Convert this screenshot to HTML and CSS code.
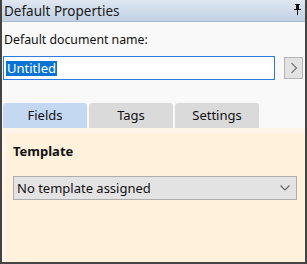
FILE: index.html
```
<!DOCTYPE html>
<html lang="en">
<head>
  <meta charset="UTF-8" />
  <title>Default Properties</title>
  <link rel="stylesheet" href="styles.css">
</head>
<body>
  <div class="pane">
    <div class="title-bar">
      <span>Default Properties</span>
      <svg class="pin" width="9" height="11" viewBox="0 0 9 11">
        <path d="M2 0h5v1H6v4h2v1H5v5H4V6H1V5h2V1H2z" fill="#111"/>
        <rect x="3" y="1" width="1" height="4" fill="#111"/>
      </svg>
    </div>

    <div class="content">
      <label class="name-label">Default document name:</label>
      <div class="name-row">
        <div class="name-input"><span class="selected">Untitled</span></div>
        <button class="arrow-btn">
          <svg width="8" height="12" viewBox="0 0 8 12"><path d="M1.5 1l5 5-5 5" fill="none" stroke="#777" stroke-width="1.2"/></svg>
        </button>
      </div>

      <!-- tab strip -->
      <div class="tabs">
        <div class="tab active">Fields</div>
        <div class="tab">Tags</div>
        <div class="tab">Settings</div>
      </div>

      <div class="tab-panel">
        <div class="tab-inner">
          <div class="section-title">Template</div>
          <div class="select">
            <span>No template assigned</span>
            <svg width="10" height="6" viewBox="0 0 10 6"><path d="M0.5 0.5l4.5 4.5 4.5-4.5" fill="none" stroke="#666" stroke-width="1.2"/></svg>
          </div>
        </div>
      </div>
    </div>
  </div>
</body>
</html>
```

FILE: styles.css
```
body {
  margin: 0;
  font-family: 'Noto Sans', sans-serif;
  font-size: 12.3px;
  color: #111;
  background: #f9f9f9;
}

.pane {
  width: 307px;
  height: 264px;
  box-sizing: border-box;
  border: 2px solid #444;
  border-top: none;
  display: flex;
  flex-direction: column;
  background: #f9f9f9;
}

.title-bar {
  height: 21px;
  display: flex;
  align-items: center;
  justify-content: space-between;
  padding: 0 3px 0 2px;
  background: linear-gradient(#dfe7f1, #c1d0e2);
  border-bottom: 1px solid #a9bbd2;
  font-size: 13.5px;
  color: #1a1a1a;
}

.pin {
  margin-top: -3px;
}

.content {
  flex: 1;
  display: flex;
  flex-direction: column;
}

.name-label {
  padding: 9px 0 0 2px;
  height: 25px;
}

.name-row {
  display: flex;
  align-items: center;
  gap: 9px;
  padding: 0 2px 0 1px;
}

.name-input {
  width: 271px;
  height: 22px;
  border: 1px solid #2c7be0;
  background: #fff;
  display: flex;
  align-items: center;
  padding-left: 2px;
  font-size: 13px;
}

.selected {
  background: #0a74d6;
  color: #fff;
  line-height: 15px;
  padding: 0 1px;
}

.arrow-btn {
  width: 19px;
  height: 22px;
  padding: 0;
  border: 1px solid #b5b5b5;
  background: #e3e3e3;
  display: flex;
  align-items: center;
  justify-content: center;
}

.tabs {
  display: flex;
  gap: 2px;
  margin-top: 23px;
  padding-left: 1px;
}

.tab {
  width: 84px;
  height: 25px;
  box-sizing: border-box;
  background: #dadada;
  border-radius: 3px 3px 0 0;
  text-align: center;
  line-height: 25px;
  font-size: 13px;
}

.tab.active {
  background: #c4d8f2;
}

.tab-panel {
  flex: 1;
  background: #fff6e9;
  padding: 5px 0 0 4px;
  display: flex;
}

.tab-inner {
  flex: 1;
  background: #fff1dc;
  padding: 9px 8px 0 7px;
}

.section-title {
  font-weight: bold;
  font-size: 13px;
  height: 34px;
}

.select {
  height: 22px;
  border: 1px solid #adadad;
  background: #e3e3e3;
  display: flex;
  align-items: center;
  justify-content: space-between;
  padding: 0 6px 0 3px;
  font-size: 13px;
}
```
